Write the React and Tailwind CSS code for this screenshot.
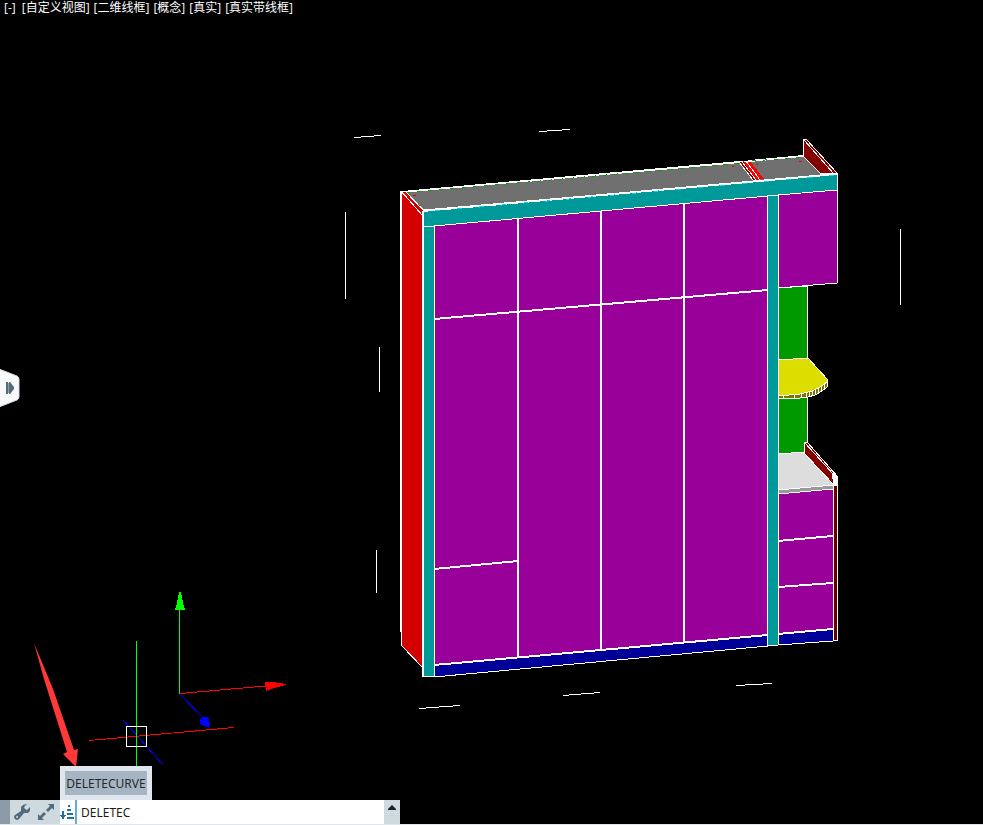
import { useState } from "react";

const viewControls = ["[自定义视图]", "[二维线框]", "[概念]", "[真实]", "[真实带线框]"];

function ViewportBar() {
  return (
    <nav className="absolute left-1 top-0 flex gap-1 text-xs leading-4 text-white">
      <button type="button" className="mr-0.5">[-]</button>
      {viewControls.map((label) => (
        <button key={label} type="button">{label}</button>
      ))}
    </nav>
  );
}

function Cabinet() {
  return (
    <g stroke="#fff" strokeWidth="1">
      {/* top board */}
      <path fill="#707070" d="M402 192 804 156 837 174 424 210Z" />
      <path strokeWidth="2" d="M402 192 740 162M750 161 804 156" />
      <path stroke="#00a000" strokeDasharray="4 7" d="M406 193 740 163M752 161 804 157" />

      {/* left side panel */}
      <path fill="#d40000" d="M401 192 423 212V668L401 645Z" />
      <path fill="#d40000" d="M401 191H405L423 210V216Z" />
      <path strokeWidth="2" d="M401 191V632" />

      {/* divider seen from above */}
      <path stroke="none" fill="#850000" d="M739 162H744L758 180H753Z" />
      <path stroke="none" fill="#ff0000" d="M743 161H750L764 179 756 180Z" />
      <path d="M739 162 753 180M742 162 756 180M746 161 760 180M744 161H750" />

      {/* right side panel, upper */}
      <path fill="#850000" d="M803 140 806 139 837 173 821 174 803 156Z" />
      <path d="M804 140 834 174" />

      {/* front frame */}
      <path fill="#009999" d="M423 211 837 174V190L423 227Z" />
      <path strokeWidth="2" d="M423 211 837 174" />
      <path stroke="#00d8e8" strokeDasharray="5 17" d="M435 211 837 175" />

      {/* doors */}
      <path fill="#990099" d="M434 226 768 196V635L434 665Z" />
      <path fill="#990099" d="M778 195 837 190V283L778 288Z" />
      <path strokeWidth="2" d="M518 218V657M601 211V650M684 204V642M434 319 768 290M434 569 518 561" />

      {/* back board behind the shelves */}
      <path fill="#009900" d="M778 288 807 286V453L778 455Z" />

      {/* round shelf */}
      <path fill="#777700" d="M778 396 800 393 815 389 827 380V387L822 391 815 395 808 397 800 398 778 399Z" />
      <path fill="#dddd00" d="M778 360 808 358 827 379V382L820 387 812 391 800 394 778 396Z" />
      <path d="M783 396V399M794 395V398M801 394V398M806 393V397M809 392V397M812 391V396M815 390V395M818 388V393M821 386V391M824 384V389" />

      {/* desk */}
      <path fill="#dddddd" d="M778 454 804 452 834 484V486L778 491Z" />
      <path fill="#999999" d="M778 490 834 485V489L778 494Z" />
      <path fill="#990099" d="M778 494 833 489V629L778 634Z" />
      <path strokeWidth="2" d="M778 541 833 536M778 587 833 583" />
      <path fill="#850000" d="M804 443 807 442 837 476V484H833L804 453Z" />
      <path d="M805 443 834 475" />
      <path fill="#fff" d="M832 474 835 473 837 478V484H834Z" />
      <path fill="#660000" d="M833 485H837V640H833Z" />

      {/* plinth */}
      <path fill="#000099" d="M434 665 768 635V646L434 677Z" />
      <path fill="#000099" d="M778 634 833 629V641L778 645Z" />
      <path strokeWidth="2" d="M434 665 768 635M778 634 833 629" />

      {/* posts */}
      <path fill="#009999" d="M423 227 434 226V676L423 677Z" />
      <path strokeWidth="2" d="M423 211V677" />
      <path fill="#009999" d="M767 196 778 195V645L767 646Z" />

      <path stroke="#e00000" d="M413 195H416M732 166H734M756 164H758M799 161H802" />
    </g>
  );
}

function Drawing() {
  return (
    <svg
      className="block h-auto w-full"
      viewBox="0 0 983 824"
      fill="none"
      shapeRendering="crispEdges"
      role="img"
      aria-label="Cabinet model"
    >
      {/* dimension marks */}
      <path
        stroke="#fff"
        d="M354 137.5 381 135.5M539 131.5 570 129.5M345.5 212V299M379.5 347V392M376.5 550V593M900.5 229V305M419 708.5 460 705.5M563 695.5 600 692.5M736 685.5 772 683.5"
      />

      <Cabinet />

      {/* ucs icon */}
      <path stroke="#0000ff" d="M180 694 204 719" />
      <path fill="#0000ff" d="M202 717H207L209 719 210 727H206L200 724V719Z" />
      <path stroke="#ff0000" d="M180 693.5 266 686" />
      <path fill="#ff0000" d="M265 682H273L286 684V685L274 688 266 691Z" />
      <path stroke="#00ff00" d="M179.5 609V694" />
      <path fill="#00ff00" d="M179 592H181L183 603 185 610H175L177 603Z" />

      {/* crosshair */}
      <path stroke="#0000ff" d="M123 720 163 765" />
      <path stroke="#ff0000" d="M89 740.5 234 727.5" />
      <path stroke="#00ff00" d="M136.5 641V766" />
      <rect x="126.5" y="726.5" width="20" height="20" stroke="#fff" />

      {/* pointer to the suggestion */}
      <path
        shapeRendering="geometricPrecision"
        fill="#ff3838"
        d="M34 643 53 689 74 750 78 749 76 767 63 754 67 752 44 679Z"
      />
    </svg>
  );
}

function PaletteTab() {
  return (
    <button
      type="button"
      aria-label="Expand palette"
      className="absolute left-0 top-[368px] h-10 w-5"
    >
      <svg className="block h-10 w-5" viewBox="0 0 20 40">
        <path fill="#f7f9fb" stroke="#d3dae0" strokeWidth="1" d="M-1 1 17 8Q19 9 19 11V29Q19 31 17 32L-1 39Z" />
        <path fill="#566b7a" d="M6 14H8V26H6ZM9 14H10L14 19V21L10 26H9Z" />
        <path fill="#8f9ea9" d="M8 15H9V25H8Z" />
      </svg>
    </button>
  );
}

function WrenchIcon() {
  return (
    <svg className="size-4" viewBox="0 0 16 16" fill="#526b7d">
      <path d="M13 0 10 3 11 5 13 6 16 3V7L14 9H10L5 15Q3 17 1 15T1 11L7 7V3Q9 0 13 0ZM3 12A1 1 0 1 0 3 14 1 1 0 1 0 3 12Z" />
    </svg>
  );
}

function ResizeIcon() {
  return (
    <svg className="size-4" viewBox="0 0 16 16" fill="#526b7d">
      <path d="M10 0H16V6L14 4 10 8 8 6 12 2ZM6 16H0V10L2 12 6 8 8 10 4 14Z" />
    </svg>
  );
}

function SortIcon() {
  return (
    <svg className="h-4 w-[15px]" viewBox="0 0 15 16" fill="#1d71a5" shapeRendering="crispEdges">
      <path d="M2 7H4V11H6V12H5V13H4V15H2V13H1V12H0V11H2ZM8 1H10V3H8ZM7 5H11V7H7ZM7 9H13V11H7ZM7 13H14V15H7Z" />
    </svg>
  );
}

function CommandLine() {
  const [command, setCommand] = useState("DELETEC");

  return (
    <div className="absolute bottom-0 left-0 w-full border-b border-[#dfe7ed] font-['Noto_Sans',sans-serif]">
      <div className="ml-[60px] w-fit bg-[#dfe6ed] p-[5px]">
        <button
          type="button"
          onClick={() => setCommand("DELETECURVE")}
          className="block h-6 w-[82px] whitespace-nowrap bg-[#a7b4c2] pt-0.5 text-xs leading-[22px] text-[#222b33]"
        >
          DELETECURVE
        </button>
      </div>

      <form className="flex h-6 w-[400px] max-w-full" onSubmit={(e) => e.preventDefault()}>
        <div className="w-[10px] bg-[#8b9ba8]" />
        <div className="flex w-[50px] items-center justify-between bg-[#cfd9e0] pl-1 pr-1.5">
          <button type="button" aria-label="Customize"><WrenchIcon /></button>
          <button type="button" aria-label="Resize"><ResizeIcon /></button>
        </div>
        <button type="button" aria-label="Suggestions" className="flex w-[15px] items-center bg-white">
          <SortIcon />
        </button>
        <input
          aria-label="Command"
          value={command}
          onChange={(e) => setCommand(e.target.value)}
          className="min-w-0 flex-1 border-l-2 border-[#63add8] bg-white pl-1 pt-0.5 text-xs text-[#1a1a1a] outline-none"
        />
        <button type="button" aria-label="Command history" className="flex w-4 justify-center bg-[#cfd9e0] pt-[5px]">
          <svg className="h-[5px] w-2" viewBox="0 0 8 5" fill="#17242d">
            <path d="M4 0 8 4V5H0V4Z" />
          </svg>
        </button>
      </form>
    </div>
  );
}

export default function App() {
  return (
    <main className="relative min-h-screen bg-black font-['Open_Sans','Noto_Sans_CJK_SC',sans-serif]">
      <Drawing />
      <ViewportBar />
      <PaletteTab />
      <CommandLine />
    </main>
  );
}
